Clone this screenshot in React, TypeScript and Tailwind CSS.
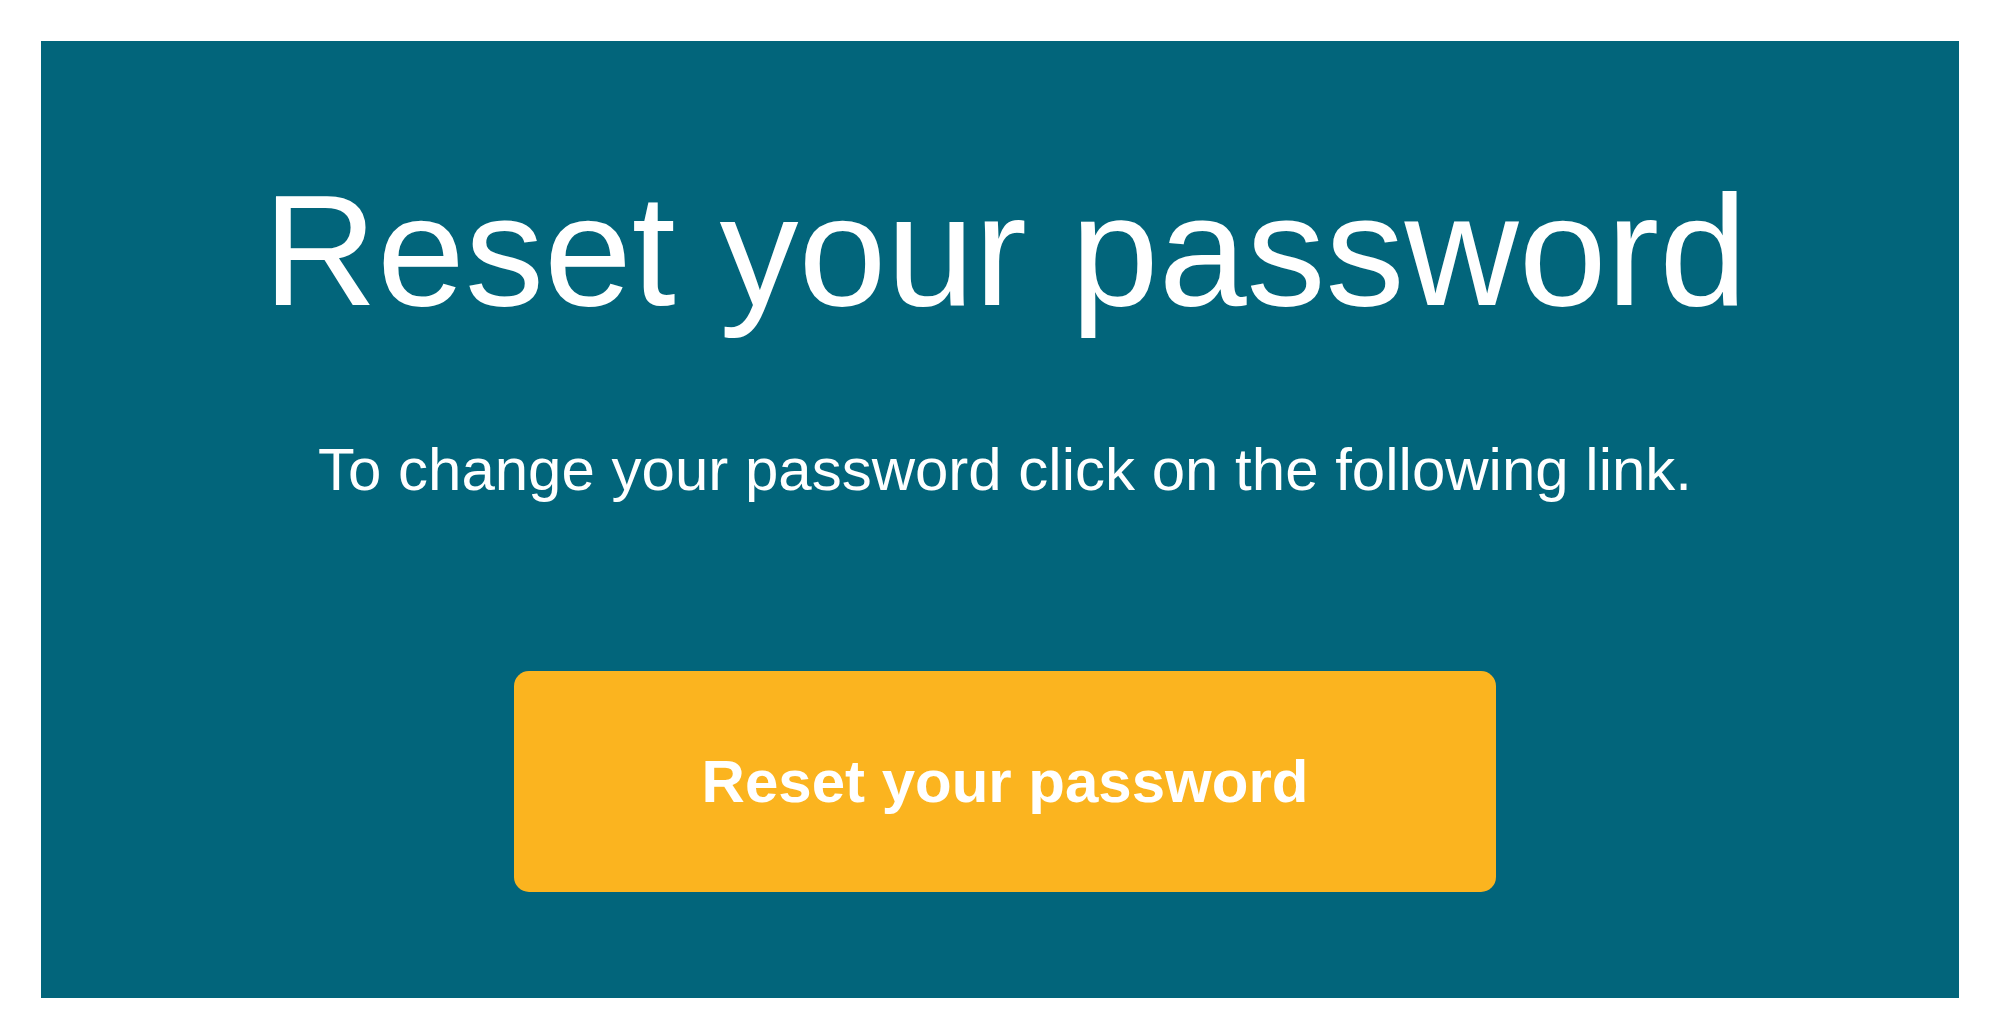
import React from 'react';

export default function App() {
  return (
    <div className="min-h-screen w-full bg-white p-[41px] font-['Liberation_Sans',Arial,sans-serif]">
      <div className="flex h-[957px] w-[1918px] flex-col items-center bg-[#02657b] pt-[130px] pl-[10px] text-white">
        <h1 className="text-[158px] leading-none font-normal">Reset your password</h1>

        <p className="mt-[111px] text-[60px] leading-none">
          To change your password click on the following link.
        </p>

        <a
          href="#"
          className="mt-[171px] flex h-[221px] w-[982px] items-center justify-center rounded-[15px] bg-[#fbb41f] text-[60px] leading-none font-bold text-white"
        >
          Reset your password
        </a>
      </div>
    </div>
  );
}
